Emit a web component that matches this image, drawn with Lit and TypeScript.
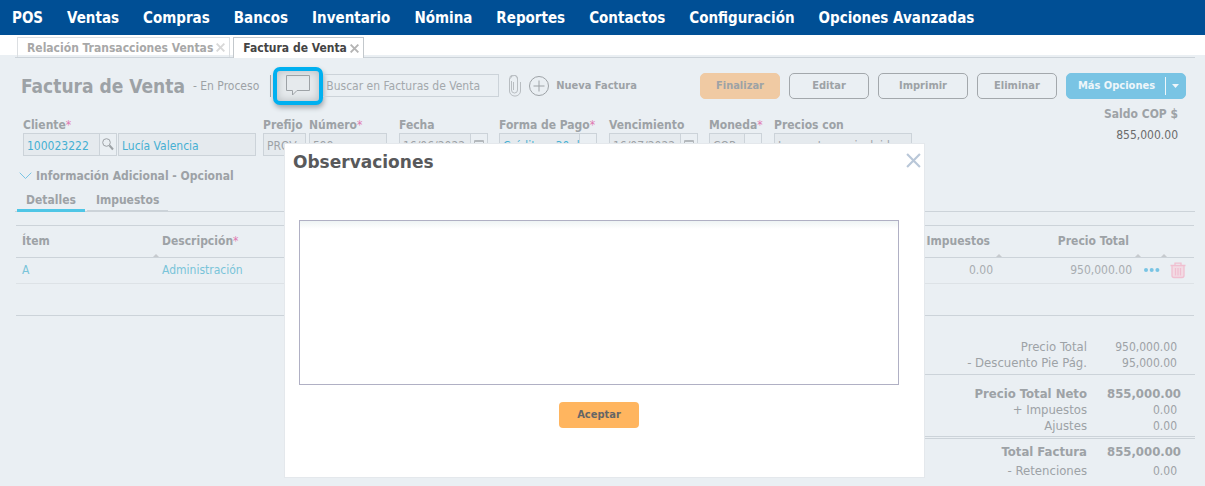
import { LitElement, html, css } from "lit";
import { customElement } from "lit/decorators.js";

const closeX = (size: number) => html`<svg class="x" width=${size} height=${size} viewBox="0 0 14 14" aria-hidden="true"><path d="M1 1 13 13M13 1 1 13" /></svg>`;

const MENU = ["POS", "Ventas", "Compras", "Bancos", "Inventario", "Nómina", "Reportes", "Contactos", "Configuración", "Opciones Avanzadas"];

interface Field {
  id: string;
  label: string;
  value: string;
  cls: string;
  required?: boolean;
  addon?: "date" | "select";
  link?: boolean;
}

const FIELDS: Field[] = [
  { id: "prefijo", label: "Prefijo", value: "PROV", cls: "w-prefijo" },
  { id: "numero", label: "Número", value: "599", cls: "w-numero", required: true },
  { id: "fecha", label: "Fecha", value: "16/06/2022", cls: "w-fecha", addon: "date" },
  { id: "forma", label: "Forma de Pago", value: "Crédito a 30 días", cls: "w-forma", required: true, addon: "select", link: true },
  { id: "venc", label: "Vencimiento", value: "16/07/2022", cls: "w-fecha", addon: "date" },
  { id: "moneda", label: "Moneda", value: "COP", cls: "w-moneda", required: true, addon: "select" },
  { id: "precios", label: "Precios con", value: "Impuestos no incluidos", cls: "w-precios" },
];

@customElement("app-root")
export class AppRoot extends LitElement {
  static styles = css`
    :host {
      display: block;
      position: relative;
      min-height: 100vh;
      overflow: hidden;
      background: #eaeff3;
      color: #9da2a6;
      font: 12px/16px "DejaVu Sans Condensed", "Noto Sans", sans-serif;
      --line: #ccd3d9;
      --field: #e5eaee;
    }
    * { box-sizing: border-box; }
    button, input, textarea { font: inherit; color: inherit; margin: 0; }
    button { cursor: pointer; }
    a { color: inherit; text-decoration: none; }
    svg { display: block; fill: none; stroke: currentColor; }
    .menu {
      display: flex;
      gap: 24px;
      height: 35px;
      align-items: center;
      padding: 0 12px;
      background: #004f95;
      color: #fff;
      font-size: 15px;
      font-weight: bold;
      white-space: nowrap;
    }
    .tabs {
      display: flex;
      gap: 3px;
      padding: 2px 2px 0;
      margin: 0 10px 0 15px;
      border-bottom: 1px solid var(--line);
    }
    .strip { background: linear-gradient(#fff 20px, transparent 20px); }
    .tab {
      display: flex;
      align-items: center;
      gap: 3px;
      height: 20px;
      padding: 0 4px 0 9px;
      border: 1px solid #dcdfe2;
      border-bottom: 0;
      background: none;
      font-weight: bold;
      white-space: nowrap;
      color: #a8a8a8;
    }
    .tab.on { background: #fff; border-color: #c3c8cc; color: #444; height: 21px; margin-bottom: -1px; }
    .tab .x { color: #d8d8d8; stroke-width: 3; }
    .tab.on .x { color: #b4b4b4; }
    .head {
      display: flex;
      align-items: center;
      padding: 14px 19px 0 21px;
      height: 41px;
      white-space: nowrap;
    }
    h1 { margin: 0; font-size: 19px; line-height: 26px; }
    .state { margin-left: 8px; }
    .sep { width: 1px; height: 22px; background: #9da2a6; margin-left: 11px; }
    .note {
      margin-left: 2px;
      width: 50px;
      height: 38px;
      display: grid;
      place-items: center;
      border: 4px solid #00b0f0;
      border-radius: 7px;
      background: #e6eaed;
      box-shadow: inset 0 0 8px #b4b9bd, 1px 3px 5px #a6abb0;
      padding: 0;
    }
    .search {
      width: 176px;
      height: 23px;
      border: 1px solid var(--line);
      border-left: 0;
      background: none;
      padding: 1px 3px 0;
    }
    .search::placeholder { color: #a3a8ac; opacity: 1; }
    .clip { margin-left: 9px; }
    .add {
      display: flex;
      align-items: center;
      gap: 7px;
      margin-left: 7px;
      border: 0;
      background: none;
      padding: 0;
      font-size: 11px;
      font-weight: bold;
    }
    .actions { display: flex; gap: 9px; margin-left: auto; }
    .btn {
      width: 80px;
      height: 26px;
      padding: 0;
      border: 1px solid #a3a8ac;
      border-radius: 5px;
      background: none;
      font-size: 11px;
      font-weight: bold;
    }
    .btn.wide { width: 90px; }
    .btn.main { background: #f0caa3; border-color: #f0caa3; }
    .btn.more {
      width: 120px;
      display: flex;
      align-items: center;
      justify-content: space-between;
      padding: 0 6px 0 11px;
      background: #79c4e4;
      border-color: #79c4e4;
      color: #eef6fa;
    }
    .caret { display: flex; align-items: center; gap: 6px; }
    .caret::before { content: ""; width: 1px; height: 18px; background: #eef6fa; }
    .fields { display: flex; padding: 18px 27px 0 23px; white-space: nowrap; }
    .field label { display: block; font-weight: bold; height: 16px; }
    .req { color: #e07ab0; font-weight: normal; }
    .box {
      display: flex;
      height: 23px;
      border: 1px solid var(--line);
      background: var(--field);
    }
    .box input {
      flex: 1;
      min-width: 0;
      width: 0;
      border: 0;
      background: none;
      padding: 2px 0 0 3px;
    }
    .addon {
      display: grid;
      place-items: center;
      width: 17px;
      border: 0;
      border-left: 1px solid var(--line);
      background: #eaeff3;
      padding: 0;
    }
    .link, .box .link { color: #45b0d3; }
    .pair { display: flex; gap: 1px; }
    .w-code { width: 94px; }
    .w-name { width: 138px; }
    .w-prefijo { width: 43px; margin-left: 7px; }
    .w-numero { width: 78px; margin-left: 3px; }
    .w-fecha { width: 89px; margin-left: 12px; }
    .w-forma { width: 98px; margin-left: 11px; }
    .w-moneda { width: 53px; margin-left: 11px; }
    .w-precios { width: 138px; margin-left: 12px; }
    .saldo { margin-left: auto; text-align: right; margin-top: -13px; line-height: 21px; }
    .saldo b { display: block; }
    .saldo span { color: #6b6b6b; }
    .info {
      display: flex;
      align-items: center;
      gap: 4px;
      margin: 12px 0 0 19px;
      padding: 0;
      border: 0;
      background: none;
      font-weight: bold;
    }
    .info svg { color: #79c4e4; }
    .subtabs {
      display: flex;
      gap: 2px;
      margin: 6px 10px 0 15px;
      padding-left: 2px;
      border-bottom: 1px solid var(--line);
    }
    .subtabs button {
      height: 21px;
      padding: 0 9px;
      border: 0;
      border-bottom: 1px solid var(--line);
      background: none;
      font-weight: bold;
    }
    .subtabs .on { border-bottom: 3px solid #4fc6e6; height: 22px; margin-bottom: -1px; padding-top: 1px; }
    .tablewrap { margin: 13px 11px 0 16px; padding-bottom: 31px; border-top: 1px solid var(--line); border-bottom: 1px solid var(--line); }
    table { width: 100%; border-collapse: collapse; table-layout: fixed; }
    th { height: 31px; padding: 0 6px; text-align: left; border-bottom: 1px solid var(--line); white-space: nowrap; position: relative; }
    th.mark::after {
      content: "";
      position: absolute;
      right: -3px;
      bottom: 0;
      border: 3px solid transparent;
      border-top: 0;
      border-bottom-color: #c6cace;
    }
    td { height: 26px; padding: 0 6px; border-bottom: 1px solid #dde2e6; color: #a8adb1; white-space: nowrap; }
    .num { text-align: right; }
    th.num { padding-right: 9px; }
    td .link { color: #79c4d9; }
    .c-item { width: 140px; }
    .c-tax { width: 140px; }
    .c-total { width: 139px; }
    .c-dots { width: 26px; }
    .c-del { width: 30px; }
    .icon { display: block; padding: 0; border: 0; background: none; }
    .dots { color: #79c4e4; }
    .trash { color: #f0bfd0; }
    .totals { width: 50%; margin: 23px 10px 0 auto; }
    .totals dl { margin: 0; padding: 0 14px 3px; border-bottom: 1px solid var(--line); }
    .totals dl + dl { padding: 11px 14px 2px; border-bottom: 3px double #ccd3d9; }
    .totals dl + dl + dl { padding-top: 5px; border: 0; }
    .row { display: grid; grid-template-columns: 1fr 94px; line-height: 16px; text-align: right; }
    .row dt { margin: 0; font-size: 13px; }
    .row dd { margin: 0; padding-right: 4px; }
    .row.sum { font-weight: bold; font-size: 13px; }
    .row.sum dd { padding-right: 0; }
    .row.gap { margin-top: 3px; }
    .layer {
      position: absolute;
      top: 143px;
      left: 4px;
      right: 0;
      display: flex;
      justify-content: center;
    }
    .modal {
      width: 641px;
      padding: 6px 25px 49px 14px;
      border: 1px solid #e4e8ec;
      background: #fff;
      display: flex;
      flex-direction: column;
      color: #58595b;
    }
    .mhead { display: flex; justify-content: space-between; align-items: flex-start; margin: 0 -25px 46px -6px; }
    h2 { margin: 0; font: bold 17px/24px "DejaVu Sans", sans-serif; }
    .close { padding: 3px; border: 0; background: none; color: #b9c7d8; }
    .close .x { stroke-width: 2; }
    textarea {
      display: block;
      width: 100%;
      height: 165px;
      border: 1px solid #b0b0c4;
      background: linear-gradient(#eef4f4, #fff 8px);
      resize: none;
    }
    .ok {
      align-self: center;
      width: 80px;
      height: 26px;
      margin-top: 17px;
      padding: 0;
      border: 0;
      border-radius: 4px;
      background: #ffb55f;
      color: #666;
      font-size: 11px;
      font-weight: bold;
    }
  `;

  private field(f: Field) {
    return html`<div class="field ${f.cls}">
      <label for=${f.id}>${f.label}${f.required ? html`<span class="req">*</span>` : ""}</label>
      <div class="box">
        <input id=${f.id} class=${f.link ? "link" : ""} .value=${f.value} />
        ${f.addon === "date"
          ? html`<button class="addon" aria-label="Calendario"><svg width="10" height="11" viewBox="0 0 10 11"><path d="M.5 1.5h9v9h-9zM.5 2.500h9" stroke="#b4b9bd" /></svg></button>`
          : f.addon === "select"
            ? html`<button class="addon" aria-label="Desplegar"></button>`
            : ""}
      </div>
    </div>`;
  }

  private row(label: string, value: string, cls = "") {
    return html`<div class="row ${cls}"><dt>${label}</dt><dd>${value}</dd></div>`;
  }

  render() {
    return html`
      <nav class="menu">${MENU.map((m) => html`<a href="#">${m}</a>`)}</nav>
      <div class="strip">
        <div class="tabs">
          <button class="tab">Relación Transacciones Ventas ${closeX(9)}</button>
          <button class="tab on">Factura de Venta ${closeX(9)}</button>
        </div>
      </div>
      <div class="head">
        <h1>Factura de Venta</h1>
        <span class="state">- En Proceso</span>
        <span class="sep"></span>
        <button class="note" aria-label="Observaciones">
          <svg width="24" height="21" viewBox="0 0 24 21"><path d="M.5.5h23v15H11l-4.500 4.500v-4.500H.5z" /></svg>
        </button>
        <input class="search" placeholder="Buscar en Facturas de Venta" aria-label="Buscar en Facturas de Venta" />
        <svg class="clip" width="14" height="22" viewBox="0 0 14 22"><path d="M3.500 6v9a3 3 0 0 0 6 0V4.500a3.500 3.500 0 0 0-7-1M9.500 5V4a3.800 3.800 0 0 0-8 0v12a5.400 5 0 0 0 11 0V7M5.500 7v8" stroke="#b8bdc1" /></svg>
        <button class="add">
          <svg width="20" height="20" viewBox="0 0 20 20"><circle cx="10" cy="10" r="9.500" /><path d="M10 4.500v11M4.500 10h11" /></svg>
          Nueva Factura
        </button>
        <div class="actions">
          <button class="btn main">Finalizar</button>
          <button class="btn">Editar</button>
          <button class="btn wide">Imprimir</button>
          <button class="btn">Eliminar</button>
          <button class="btn more">Más Opciones
            <span class="caret"><svg width="7" height="4" viewBox="0 0 7 4"><path d="M0 0h7L3.500 4z" fill="currentColor" stroke="none" /></svg></span>
          </button>
        </div>
      </div>
      <div class="fields">
        <div class="field">
          <label for="cliente">Cliente<span class="req">*</span></label>
          <div class="pair">
            <div class="box w-code">
              <input id="cliente" class="link" .value=${"100023222"} />
              <button class="addon" aria-label="Buscar cliente"><svg width="12" height="13" viewBox="0 0 12 13"><circle cx="4.500" cy="4.500" r="3.800" /><path d="M7.500 7.500 11 11.500" stroke-width="2" /></svg></button>
            </div>
            <div class="box w-name"><input class="link" aria-label="Nombre del cliente" .value=${"Lucía Valencia"} /></div>
          </div>
        </div>
        ${FIELDS.map((f) => this.field(f))}
        <div class="saldo"><b>Saldo COP $</b><span>855,000.00</span></div>
      </div>
      <button class="info">
        <svg width="13" height="8" viewBox="0 0 13 8"><path d="M.7.700 6.500 6.500 12.300.700" /></svg>
        Información Adicional - Opcional
      </button>
      <div class="subtabs">
        <button class="on">Detalles</button>
        <button>Impuestos</button>
      </div>
      <div class="tablewrap">
        <table>
          <thead>
            <tr>
              <th class="c-item mark">Ítem</th>
              <th>Descripción<span class="req">*</span></th>
              <th class="c-tax num mark">Impuestos</th>
              <th class="c-total num mark">Precio Total</th>
              <th class="c-dots mark"></th>
              <th class="c-del"></th>
            </tr>
          </thead>
          <tbody>
            <tr>
              <td><a class="link" href="#">A</a></td>
              <td><a class="link" href="#">Administración</a></td>
              <td class="num">0.00</td>
              <td class="num">950,000.00</td>
              <td><button class="icon dots" aria-label="Más"><svg width="16" height="4" viewBox="0 0 16 4"><g fill="currentColor" stroke="none"><circle cx="2" cy="2" r="2" /><circle cx="7.700" cy="2" r="2" /><circle cx="13.400" cy="2" r="2" /></g></svg></button></td>
              <td><button class="icon trash" aria-label="Eliminar fila"><svg width="16" height="17" viewBox="0 0 16 17"><path d="M2 3.500h12v10a2 2 0 0 1-2 2H4a2 2 0 0 1-2-2z" fill="#f2dbe4" stroke="none" /><path d="M.5 3.500h15M5 3V1.200h6V3M2 3.500v10a2 2 0 0 0 2 2h8a2 2 0 0 0 2-2v-10M5.500 6v7.500M8 6v7.500M10.500 6v7.500" stroke-width="1.300" /></svg></button></td>
            </tr>
          </tbody>
        </table>
      </div>
      <div class="totals">
        <dl>${this.row("Precio Total", "950,000.00")}${this.row("- Descuento Pie Pág.", "95,000.00")}</dl>
        <dl>${this.row("Precio Total Neto", "855,000.00", "sum")}${this.row("+ Impuestos", "0.00")}${this.row("Ajustes", "0.00")}</dl>
        <dl>${this.row("Total Factura", "855,000.00", "sum")}${this.row("- Retenciones", "0.00", "gap")}</dl>
      </div>
      <div class="layer">
        <section class="modal" role="dialog" aria-labelledby="obs">
          <div class="mhead">
            <h2 id="obs">Observaciones</h2>
            <button class="close" aria-label="Cerrar">${closeX(15)}</button>
          </div>
          <textarea aria-labelledby="obs"></textarea>
          <button class="ok">Aceptar</button>
        </section>
      </div>
    `;
  }
}
